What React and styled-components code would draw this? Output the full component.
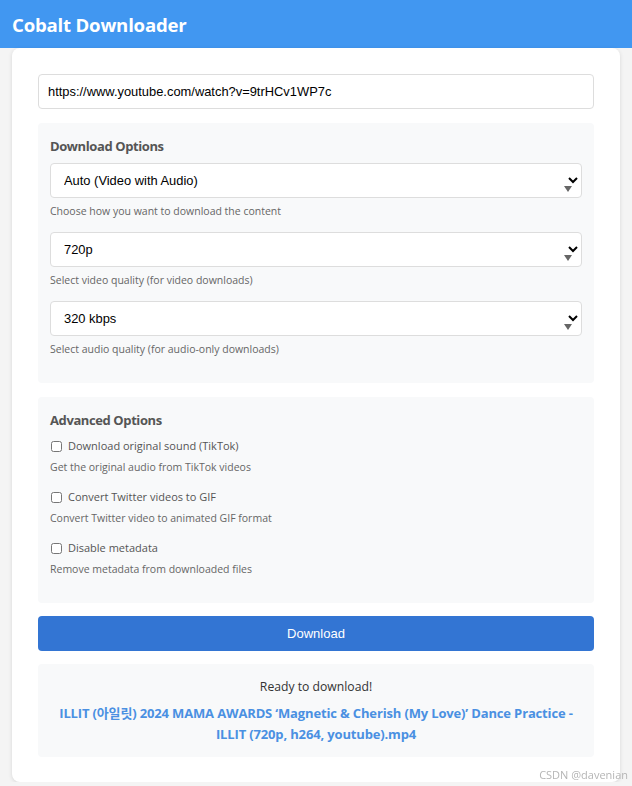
import React from "react";
import styled, { createGlobalStyle } from "styled-components";

const Global = createGlobalStyle`
  html, body { margin: 0; padding: 0; }
  body {
    background: #f4f4f4;
    font-family: "Open Sans", "Noto Sans", "Liberation Sans", sans-serif;
    color: #333;
  }
`;

const Header = styled.header`
  height: 48px;
  background: #4197f1;
  display: flex;
  align-items: center;
  padding: 0 12px;
`;

const Title = styled.h1`
  margin: 0;
  color: #fff;
  font-size: 18.6px;
  font-weight: 700;
  letter-spacing: -0.2px;
`;

const Card = styled.main`
  margin: 0 12px;
  background: #fff;
  border-radius: 8px;
  box-shadow: 0 1px 4px rgba(0, 0, 0, 0.12);
  padding: 26px 26px 25px;
  display: flex;
  flex-direction: column;
  height: 734px;
  box-sizing: border-box;
`;

const UrlInput = styled.input`
  height: 35px;
  box-sizing: border-box;
  border: 1px solid #ddd;
  border-radius: 4px;
  padding: 0 9px;
  font-family: "Liberation Sans", Arial, sans-serif;
  font-size: 12.9px;
  color: #000;
  margin-bottom: 14px;
`;

const Panel = styled.section`
  background: #f8f9fa;
  border-radius: 4px;
  padding: 13px 12px;
  margin-bottom: ${(p) => p.$mb}px;
`;

const PanelTitle = styled.h3`
  margin: 0 0 ${(p) => p.$mb}px;
  font-size: 13px;
  line-height: 20px;
  font-weight: 700;
  letter-spacing: -0.4px;
  color: #555;
`;

const Group = styled.div`
  margin-bottom: 14px;
  &:last-child { margin-bottom: 14px; }
`;

const SelectWrap = styled.div`
  position: relative;
`;

const Select = styled.select`
  width: 100%;
  height: 35px;
  box-sizing: border-box;
  border: 1px solid #ddd;
  border-radius: 4px;
  padding: 0 9px;
  background: #fff;
  font-family: "Liberation Sans", Arial, sans-serif;
  font-size: 12.9px;
  color: #000;
`;

const Triangle = styled.span`
  position: absolute;
  right: 10px;
  bottom: 6px;
  width: 0;
  height: 0;
  border-left: 4px solid transparent;
  border-right: 4px solid transparent;
  border-top: 6px solid #666;
  pointer-events: none;
`;

const Help = styled.div`
  margin-top: ${(p) => p.$mt}px;
  font-size: 10.5px;
  line-height: 14px;
  color: #666;
`;

const CheckRow = styled.label`
  display: flex;
  align-items: center;
  gap: 6px;
  font-size: 11px;
  line-height: 18px;
  color: #555;
`;

const Check = styled.input`
  margin: 0 0 0 1px;
  width: 11px;
  height: 11px;
`;

const CheckGroup = styled.div`
  margin-bottom: 14px;
  &:last-child { margin-bottom: 14px; }
`;

const Button = styled.button`
  height: 35px;
  border: none;
  border-radius: 4px;
  background: #3375d3;
  color: #fff;
  font-family: "Liberation Sans", Arial, sans-serif;
  font-size: 13px;
  margin-bottom: 13px;
`;

const Result = styled.section`
  background: #f8f9fa;
  border-radius: 4px;
  padding: 13px 12px 12px;
  text-align: center;
`;

const Ready = styled.p`
  margin: 0 0 6px;
  font-size: 12.2px;
  line-height: 20px;
  color: #333;
`;

const FileLink = styled.a`
  display: block;
  font-size: 13px;
  line-height: 21px;
  font-weight: 700;
  letter-spacing: -0.15px;
  color: #4a90e2;
  text-decoration: none;
  font-family: "Open Sans", "Noto Sans", "Noto Sans CJK KR", sans-serif;
`;

const Watermark = styled.div`
  position: fixed;
  right: 4px;
  bottom: 4px;
  font-size: 11px;
  color: #b5b5b5;
`;

const selects = [
  { value: "Auto (Video with Audio)", help: "Choose how you want to download the content" },
  { value: "720p", help: "Select video quality (for video downloads)" },
  { value: "320 kbps", help: "Select audio quality (for audio-only downloads)" },
];

const checks = [
  { label: "Download original sound (TikTok)", help: "Get the original audio from TikTok videos" },
  { label: "Convert Twitter videos to GIF", help: "Convert Twitter video to animated GIF format" },
  { label: "Disable metadata", help: "Remove metadata from downloaded files" },
];

export default function App() {
  return (
    <>
      <Global />
      <Header>
        <Title>Cobalt Downloader</Title>
      </Header>
      <Card>
        <UrlInput defaultValue="https://www.youtube.com/watch?v=9trHCv1WP7c" />
        <Panel $mb={14}>
          <PanelTitle $mb={7}>Download Options</PanelTitle>
          {selects.map((s) => (
            <Group key={s.value}>
              <SelectWrap>
                <Select defaultValue={s.value}>
                  <option>{s.value}</option>
                </Select>
                <Triangle />
              </SelectWrap>
              <Help $mt={6}>{s.help}</Help>
            </Group>
          ))}
        </Panel>
        <Panel $mb={13}>
          <PanelTitle $mb={7}>Advanced Options</PanelTitle>
          {checks.map((c) => (
            <CheckGroup key={c.label}>
              <CheckRow>
                <Check type="checkbox" />
                {c.label}
              </CheckRow>
              <Help $mt={5}>{c.help}</Help>
            </CheckGroup>
          ))}
        </Panel>
        <Button>Download</Button>
        <Result>
          <Ready>Ready to download!</Ready>
          <FileLink href="#">
            ILLIT (아일릿) 2024 MAMA AWARDS ‘Magnetic &amp; Cherish (My Love)’ Dance Practice - ILLIT (720p, h264, youtube).mp4
          </FileLink>
        </Result>
      </Card>
      <Watermark>CSDN @davenian</Watermark>
    </>
  );
}
